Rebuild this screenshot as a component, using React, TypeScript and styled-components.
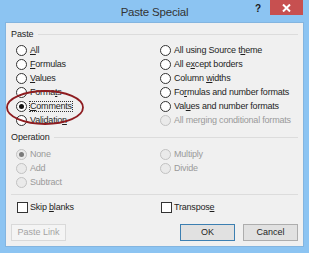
import styled, { createGlobalStyle, css } from "styled-components";

const GlobalStyle = createGlobalStyle`
  html, body {
    margin: 0;
    padding: 0;
    background: #ffffff;
  }
  body {
    font-family: "Liberation Sans", Arial, sans-serif;
    font-size: 9px;
    color: #1e1e1e;
  }
`;

type Opt = { label: string; key?: number; disabled?: boolean; checked?: boolean; focus?: boolean };

const pasteLeft: Opt[] = [
  { label: "All", key: 0 },
  { label: "Formulas", key: 0 },
  { label: "Values", key: 0 },
  { label: "Formats", key: 5 },
  { label: "Comments", key: 0, checked: true, focus: true },
  { label: "Validation", key: 9 },
];

const pasteRight: Opt[] = [
  { label: "All using Source theme", key: 18 },
  { label: "All except borders", key: 5 },
  { label: "Column widths", key: 7 },
  { label: "Formulas and number formats", key: 2 },
  { label: "Values and number formats", key: 3 },
  { label: "All merging conditional formats", disabled: true },
];

const opLeft: Opt[] = [
  { label: "None", disabled: true, checked: true },
  { label: "Add", disabled: true },
  { label: "Subtract", disabled: true },
];

const opRight: Opt[] = [
  { label: "Multiply", disabled: true },
  { label: "Divide", disabled: true },
];

function Label({ text, accessKey }: { text: string; accessKey?: number }) {
  if (accessKey === undefined) return <>{text}</>;
  return (
    <>
      {text.slice(0, accessKey)}
      <u>{text[accessKey]}</u>
      {text.slice(accessKey + 1)}
    </>
  );
}

function Radio({ opt }: { opt: Opt }) {
  return (
    <Option $disabled={opt.disabled}>
      <RadioDot $disabled={opt.disabled} $checked={opt.checked} />
      <OptionText $focus={opt.focus}>
        <Label text={opt.label} accessKey={opt.disabled ? undefined : opt.key} />
      </OptionText>
    </Option>
  );
}

export default function App() {
  return (
    <>
      <GlobalStyle />
      <Window>
        <TitleBar>
          <span />
          <Title>Paste Special</Title>
          <Controls>
            <Help>?</Help>
            <CloseButton>
              <svg width="9" height="8" viewBox="0 0 9 8">
                <path d="M1 0.5 L8 7.5 M8 0.5 L1 7.5" stroke="#fff" strokeWidth="2" />
              </svg>
            </CloseButton>
          </Controls>
        </TitleBar>
        <Frame>
          <Client>
            <Legend>Paste</Legend>
            <OptionGrid>
              <Column>
                {pasteLeft.map((o) => (
                  <Radio key={o.label} opt={o} />
                ))}
              </Column>
              <Column>
                {pasteRight.map((o) => (
                  <Radio key={o.label} opt={o} />
                ))}
              </Column>
            </OptionGrid>
            <Legend $top={2}>Operation</Legend>
            <OptionGrid $top={3}>
              <Column>
                {opLeft.map((o) => (
                  <Radio key={o.label} opt={o} />
                ))}
              </Column>
              <Column>
                {opRight.map((o) => (
                  <Radio key={o.label} opt={o} />
                ))}
              </Column>
            </OptionGrid>
            <Separator />
            <CheckGrid>
              <Option>
                <CheckBox />
                <OptionText>
                  <Label text="Skip blanks" accessKey={5} />
                </OptionText>
              </Option>
              <Option>
                <CheckBox />
                <OptionText>
                  <Label text="Transpose" accessKey={8} />
                </OptionText>
              </Option>
            </CheckGrid>
            <ButtonRow>
              <Button disabled>Paste Link</Button>
              <Spacer />
              <Button $default>OK</Button>
              <Button>Cancel</Button>
            </ButtonRow>
          </Client>
        </Frame>
        <Annotation width="80" height="37" viewBox="0 0 80 37">
          <ellipse cx="40" cy="18.5" rx="38" ry="16.5" fill="none" stroke="#8e1c20" strokeWidth="1.8" />
        </Annotation>
      </Window>
    </>
  );
}

const Window = styled.div`
  position: relative;
  width: 309px;
  height: 253px;
  overflow: hidden;
  background: #8cc4f2;
  display: flex;
  flex-direction: column;
  box-sizing: border-box;
`;

const TitleBar = styled.div`
  flex: none;
  height: 23px;
  display: grid;
  grid-template-columns: 1fr auto 1fr;
  align-items: start;
`;

const Title = styled.div`
  font-size: 11.5px;
  line-height: 24px;
  color: #333333;
  letter-spacing: -0.2px;
`;

const Controls = styled.div`
  justify-self: end;
  display: flex;
  align-items: flex-start;
  margin-right: 6px;
`;

const Help = styled.div`
  font-weight: bold;
  font-size: 10px;
  line-height: 18px;
  color: #1a1a1a;
  margin-right: 9px;
`;

const CloseButton = styled.div`
  width: 33px;
  height: 15px;
  background: #c75050;
  display: flex;
  align-items: center;
  justify-content: center;
`;

const Frame = styled.div`
  flex: 1;
  min-height: 0;
  display: flex;
  padding: 0 6px 7px 6px;
`;

const Client = styled.div`
  flex: 1;
  min-width: 0;
  background: #f0f0f0;
  box-shadow: 0 0 0 1px #83b5e0;
  padding: 4px 5px 0 5px;
  display: flex;
  flex-direction: column;
`;

const Legend = styled.div<{ $top?: number }>`
  display: flex;
  align-items: center;
  height: 14px;
  line-height: 14px;
  margin-top: ${(p) => p.$top ?? 0}px;
  letter-spacing: -0.1px;
  &::after {
    content: "";
    flex: 1;
    margin-left: 4px;
    border-top: 1px solid #dcdcdc;
  }
`;

const OptionGrid = styled.div<{ $top?: number }>`
  display: grid;
  grid-template-columns: 144px 1fr;
  margin: ${(p) => p.$top ?? 2}px 0 0 5px;
`;

const Column = styled.div`
  display: grid;
  grid-auto-rows: 14.2px;
`;

const Option = styled.div<{ $disabled?: boolean }>`
  display: flex;
  align-items: center;
  height: 14px;
  letter-spacing: -0.2px;
  color: ${(p) => (p.$disabled ? "#9a9a9a" : "#1e1e1e")};
  white-space: nowrap;
`;

const OptionText = styled.span<{ $focus?: boolean }>`
  line-height: 11px;
  ${(p) =>
    p.$focus &&
    css`
      outline: 1px dotted #333;
      outline-offset: -1px;
      padding: 0 1px;
      margin-left: -1px;
    `}
`;

const RadioDot = styled.span<{ $disabled?: boolean; $checked?: boolean }>`
  box-sizing: border-box;
  width: 11px;
  height: 11px;
  border-radius: 50%;
  margin-right: 3px;
  border: 1px solid ${(p) => (p.$disabled ? "#c2c2c2" : "#333333")};
  background: ${(p) => (p.$disabled ? "#eaeaea" : "#ffffff")};
  display: flex;
  align-items: center;
  justify-content: center;
  &::after {
    content: "";
    display: ${(p) => (p.$checked ? "block" : "none")};
    width: 5px;
    height: 5px;
    border-radius: 50%;
    background: ${(p) => (p.$disabled ? "#7a7a7a" : "#111111")};
  }
`;

const Separator = styled.div`
  margin-top: 4px;
  border-top: 1px solid #dcdcdc;
`;

const CheckGrid = styled.div`
  display: grid;
  grid-template-columns: 144px 1fr;
  margin: 6px 0 0 6px;
`;

const CheckBox = styled.span`
  box-sizing: border-box;
  width: 11px;
  height: 11px;
  border: 1px solid #333333;
  background: #ffffff;
  margin-right: 2px;
`;

const ButtonRow = styled.div`
  display: flex;
  gap: 8px;
  margin-top: 9px;
`;

const Spacer = styled.div`
  flex: 1;
`;

const Button = styled.button<{ $default?: boolean }>`
  box-sizing: border-box;
  width: 55px;
  height: 17px;
  padding: 0;
  font-family: "Liberation Sans", Arial, sans-serif;
  font-size: 9px;
  line-height: 15px;
  color: #1e1e1e;
  background: #e1e1e1;
  border: 1px solid ${(p) => (p.$default ? "#3c7fb1" : "#adadad")};
  &:disabled {
    background: #f4f4f4;
    border-color: #d9d9d9;
    color: #a3a3a3;
  }
`;

const Annotation = styled.svg`
  position: absolute;
  left: 5px;
  top: 89px;
  pointer-events: none;
`;
